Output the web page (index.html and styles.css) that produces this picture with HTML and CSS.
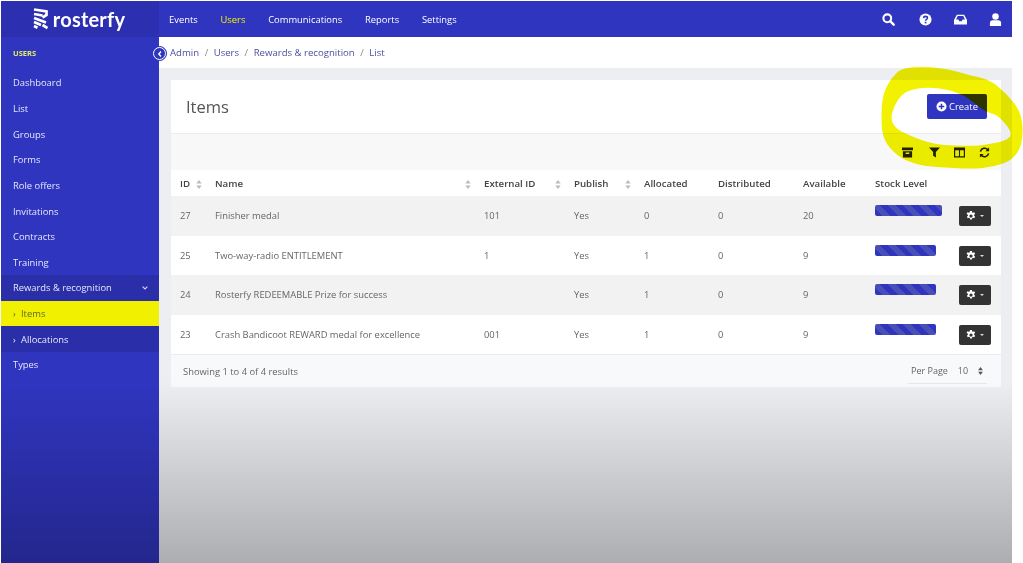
FILE: index.html
```html
<!DOCTYPE html>
<html lang="en">
<head>
<meta charset="utf-8">
<title>Items - Rosterfy</title>
<link rel="stylesheet" href="styles.css">
</head>
<body>
<svg class="defs" width="0" height="0" aria-hidden="true">
  <defs>
    <symbol id="sort" viewBox="0 0 6 10"><path d="M3 0 6 4H0ZM3 10 0 6H6Z"/></symbol>
    <symbol id="gear" viewBox="0 0 16 16"><path fill-rule="evenodd" d="M6.600 0h2.800l.4 2.200 1.300.7 2.100-.8 1.400 2.500-1.700 1.400v1.600l1.700 1.400-1.400 2.500-2.100-.8-1.300.7-.4 2.200H6.600l-.4-2.200-1.300-.7-2.100.8-1.400-2.500 1.700-1.400V6L.9 4.600l1.400-2.500 2.100.8 1.300-.7ZM8 5.400a2.600 2.600 0 1 0 0 5.200 2.600 2.600 0 0 0 0-5.200Z"/></symbol>
  </defs>
</svg>
<div class="screen">
  <header class="topbar">
    <div class="brand">
      <svg class="brand-mark" viewBox="0 0 15 22"><path fill="none" stroke="#fff" stroke-width="2.700" d="M1 1.500 13.500 3.500V7L9.500 9.500M1 6 9.500 7.500M1 10 13 14.500M1 14 8 17M1 18 4.500 19.700M9.500 17 14.500 20"/></svg>
      <span class="brand-name">rosterfy</span>
    </div>
    <nav class="topnav">
      <a>Events</a>
      <a class="active">Users</a>
      <a>Communications</a>
      <a>Reports</a>
      <a>Settings</a>
    </nav>
    <div class="top-icons">
      <svg class="first" viewBox="0 0 14 14"><circle cx="5.700" cy="5.700" r="4.200" fill="none" stroke="#fff" stroke-width="2.200"/><path d="M8.800 8.800 12.600 12.600" stroke="#fff" stroke-width="2.600" stroke-linecap="round"/></svg>
      <svg viewBox="0 0 14 14"><circle cx="7" cy="7" r="6.500" fill="#fff"/><path d="M4.900 5.500C5 3 9.100 3.100 9.100 5.400 9.100 7 7.100 6.900 7.100 8.300" fill="none" stroke="#3035c0" stroke-width="1.700"/><rect x="6.200" y="9.400" width="1.800" height="1.800" fill="#3035c0"/></svg>
      <svg viewBox="0 0 16 12"><path fill="#fff" fill-rule="evenodd" d="M3.500 0h9L16 6.500V12H0V6.500ZM4.600 1.800 2.500 6H5.500L6.500 8H9.500L10.500 6H13.500L11.400 1.800Z"/></svg>
      <svg viewBox="0 0 14 14"><circle cx="7" cy="3.700" r="3.500" fill="#fff"/><path fill="#fff" d="M1 14V10.500C1 8.500 3 7.800 4 7.800H10C11 7.800 13 8.500 13 10.500V14Z"/></svg>
    </div>
  </header>
  <div class="body-row">
    <aside class="sidebar">
      <div class="side-title">USERS</div>
      <ul class="side-menu">
        <li>Dashboard</li>
        <li>List</li>
        <li>Groups</li>
        <li>Forms</li>
        <li>Role offers</li>
        <li>Invitations</li>
        <li>Contracts</li>
        <li>Training</li>
        <li class="open">Rewards &amp; recognition<svg class="chev" viewBox="0 0 6 4"><path d="M.6.600 3 3 5.400.600" fill="none" stroke="#d8d9f5" stroke-width="1.100"/></svg></li>
        <li class="sub current"><i>›</i>Items</li>
        <li class="sub"><i>›</i>Allocations</li>
        <li>Types</li>
      </ul>
    </aside>
    <main class="main">
      <button class="collapse" aria-label="Collapse"><svg viewBox="0 0 6 8"><path d="M4 1.500 1.800 4 4 6.500" fill="none" stroke="#fff" stroke-width="1.400"/></svg></button>
      <div class="crumbs">
        <span>Admin</span><b>/</b><span>Users</span><b>/</b><span>Rewards &amp; recognition</span><b>/</b><span>List</span>
      </div>
      <div class="content">
        <section class="card">
          <div class="card-head">
            <h1>Items</h1>
            <a class="create"><svg viewBox="0 0 12 12"><circle cx="6" cy="6" r="5.500" fill="#fff"/><path d="M6 3V9M3 6H9" stroke="#3035c0" stroke-width="1.600"/></svg>Create</a>
          </div>
          <div class="toolbar">
            <svg class="first" viewBox="0 0 12 11"><path fill="#222" d="M0 0H12V3H0ZM1 4H11V11H1ZM4 5.500V7H8V5.500Z" fill-rule="evenodd"/></svg>
            <svg viewBox="0 0 12 11"><path fill="#222" d="M0 0H12L7.500 5V11L4.500 9V5Z"/></svg>
            <svg viewBox="0 0 12 11"><path fill="#222" fill-rule="evenodd" d="M0 0H12V11H0ZM1.300 3V9.700H5.400V3ZM6.600 3V9.700H10.700V3Z"/></svg>
            <svg viewBox="0 0 12 12"><path fill="none" stroke="#222" stroke-width="1.700" d="M1.500 5A4.700 4.700 0 0 1 9.800 3.200M10.500 7A4.700 4.700 0 0 1 2.200 8.800"/><path fill="#222" d="M11 .5V4.500H7ZM1 11.500V7.500H5Z"/></svg>
          </div>
          <table class="items">
            <colgroup>
              <col class="c-id"><col class="c-name"><col class="c-ext"><col class="c-pub"><col class="c-all"><col class="c-dis"><col class="c-ava"><col class="c-sto">
            </colgroup>
            <thead>
              <tr>
                <th>ID<svg class="sort"><use href="#sort"/></svg></th>
                <th>Name<svg class="sort"><use href="#sort"/></svg></th>
                <th>External ID<svg class="sort"><use href="#sort"/></svg></th>
                <th>Publish<svg class="sort"><use href="#sort"/></svg></th>
                <th>Allocated</th>
                <th>Distributed</th>
                <th>Available</th>
                <th>Stock Level</th>
              </tr>
            </thead>
            <tbody>
              <tr>
                <td>27</td><td>Finisher medal</td><td>101</td><td>Yes</td><td>0</td><td>0</td><td>20</td>
                <td><div class="stock"><span class="bar full"></span><a class="gear-btn"><svg><use href="#gear"/></svg><i></i></a></div></td>
              </tr>
              <tr>
                <td>25</td><td>Two-way-radio ENTITLEMENT</td><td>1</td><td>Yes</td><td>1</td><td>0</td><td>9</td>
                <td><div class="stock"><span class="bar"></span><a class="gear-btn"><svg><use href="#gear"/></svg><i></i></a></div></td>
              </tr>
              <tr>
                <td>24</td><td>Rosterfy REDEEMABLE Prize for success</td><td></td><td>Yes</td><td>1</td><td>0</td><td>9</td>
                <td><div class="stock"><span class="bar"></span><a class="gear-btn"><svg><use href="#gear"/></svg><i></i></a></div></td>
              </tr>
              <tr>
                <td>23</td><td>Crash Bandicoot REWARD medal for excellence</td><td>001</td><td>Yes</td><td>1</td><td>0</td><td>9</td>
                <td><div class="stock"><span class="bar"></span><a class="gear-btn"><svg><use href="#gear"/></svg><i></i></a></div></td>
              </tr>
            </tbody>
          </table>
          <div class="card-foot">
            <span>Showing 1 to 4 of 4 results</span>
            <div class="per-page"><span>Per Page</span><span>10</span><svg class="updown"><use href="#sort"/></svg></div>
          </div>
        </section>
      </div>
    </main>
  </div>
  <div class="fade"></div>
</div>
<svg class="scribble" viewBox="0 0 1023 563" aria-hidden="true">
  <path fill="#f2f200" fill-rule="evenodd" d="M897.500 72Q903 67 921.500 67Q940 67 956.500 71.500Q973 76 981.500 78Q990 80 998 86.500Q1006 93 1014 103Q1022 113 1022.500 128Q1023 143 1018 151.500Q1013 160 1003 163.500Q993 167 983 168Q973 169 954 168Q935 167 926.500 166Q918 165 908 161Q898 157 890.500 148.500Q883 140 882 128.500Q881 117 882 105Q883 93 887.500 85Q892 77 897.500 72ZM904 93.500Q910 89 922.500 88Q935 87 947.500 90Q960 93 966.500 97.500Q973 102 979.500 107Q986 112 992 113.500Q998 115 1005.500 124Q1013 133 1009.500 137Q1006 141 994.500 143Q983 145 978 145.500Q973 146 954 145.500Q935 145 921.500 140Q908 135 901.500 131.500Q895 128 892.500 122.500Q890 117 894 107.500Q898 98 904 93.500Z"/>
</svg>
</body>
</html>
```
FILE: styles.css
```css
* { box-sizing: border-box; }
html, body { margin: 0; height: 100%; overflow: hidden; }
body {
  position: relative;
  background: #fff;
  padding: 1px 0 0 1px;
  font-family: "Open Sans", "Noto Sans", sans-serif;
  font-size: 9.400px;
  color: #666;
}
.defs { position: absolute; }
.screen {
  position: relative;
  width: 1011px;
  height: 562px;
  display: flex;
  flex-direction: column;
  overflow: hidden;
}
.topbar {
  flex: 0 0 36px;
  display: flex;
  align-items: center;
  background: #3035c0;
  color: #fff;
}
.brand {
  width: 158px;
  height: 100%;
  display: flex;
  align-items: center;
  justify-content: center;
  gap: 5px;
  background: #2c30b0;
  padding-right: 2px;
}
.brand-mark { width: 15px; height: 22px; }
.brand-name {
  font-family: "Lato", sans-serif;
  font-weight: 700;
  font-size: 20px;
  letter-spacing: .2px;
  color: #fff;
}
.topnav { display: flex; gap: 22.800px; margin-left: 10px; }
.topnav a { color: #fff; }
.topnav .active { color: #f0f000; }
.top-icons {
  margin-left: auto;
  display: flex;
  align-items: center;
  gap: 22px;
  padding-right: 10px;
}
.top-icons svg { width: 13px; height: 13px; }
.top-icons .first { margin-right: 2px; }
.body-row { flex: 1; display: flex; min-height: 0; }
.sidebar {
  flex: 0 0 158px;
  background: #3035c0;
  color: #e6e7fa;
}
.side-title {
  height: 33px;
  padding: 11px 0 0 12px;
  font-size: 7.500px;
  font-weight: 700;
  color: #e4ec60;
}
.side-menu { list-style: none; margin: 0; padding: 0; }
.side-menu li {
  height: 25.650px;
  display: flex;
  align-items: center;
  padding-left: 12px;
}
.side-menu .open { background: #2a2ea8; position: relative; }
.side-menu .sub { background: #2a2ea8; padding-left: 12px; }
.side-menu .sub i { font-style: normal; font-size: 9px; width: 8px; }
.side-menu .current { background: #f0f000; color: #5c6a20; }
.chev { width: 6px; height: 4px; margin-left: auto; margin-right: 11px; }
.main {
  flex: 1;
  position: relative;
  display: flex;
  flex-direction: column;
  min-width: 0;
}
.collapse {
  position: absolute;
  left: -7px;
  top: 9px;
  width: 15px;
  height: 15px;
  padding: 0;
  border: 1.500px solid #3035c0;
  outline: 1px solid #fff;
  outline-offset: -2.500px;
  border-radius: 50%;
  background: #3035c0;
  display: flex;
  align-items: center;
  justify-content: center;
}
.collapse svg { width: 6px; height: 8px; }
.crumbs {
  flex: 0 0 31px;
  display: flex;
  align-items: center;
  gap: 5.500px;
  padding-left: 11px;
  background: #fff;
  color: #4b4f9e;
  font-size: 9.600px;
}
.crumbs b { font-weight: 400; color: #888; }
.content { flex: 1; background: #eceef2; padding: 12px 11px 0 12px; }
.card { background: #fff; }
.card-head {
  height: 54px;
  display: flex;
  align-items: center;
  justify-content: space-between;
  padding: 0 14px 0 15px;
  border-bottom: 1px solid #ececee;
}
.card-head h1 { margin: 0; font-size: 16.500px; font-weight: 400; color: #555; }
.create {
  width: 60px;
  height: 25px;
  display: flex;
  align-items: center;
  justify-content: center;
  gap: 2px;
  border-radius: 2px;
  background: #3035c0;
  color: #fff;
}
.create svg { width: 11px; height: 11px; }
.toolbar {
  height: 36px;
  display: flex;
  align-items: center;
  justify-content: flex-end;
  gap: 14px;
  padding-right: 11px;
  background: #f8f8f9;
}
.toolbar svg { width: 11px; height: 11px; }
.toolbar .first { margin-right: 2px; }
.items {
  width: 100%;
  border-collapse: collapse;
  table-layout: fixed;
}
.c-id { width: 35px; }
.c-name { width: 269px; }
.c-ext { width: 90px; }
.c-pub { width: 70px; }
.c-all { width: 74px; }
.c-dis { width: 85px; }
.c-ava { width: 72px; }
.items th {
  height: 26px;
  padding: 0 4px 0 9px;
  text-align: left;
  font-weight: 600;
  color: #444;
  font-size: 9.700px;
}
.sort { float: right; width: 6px; height: 9px; margin-top: 3px; fill: #bbb; }
.items td { height: 39.500px; padding: 0 0 0 9px; }
.items tbody tr:nth-child(odd) { background: #f2f2f2; }
.stock {
  display: flex;
  justify-content: space-between;
  align-items: flex-start;
  padding: 0 10px 0 0;
}
.bar {
  width: 61px;
  height: 11px;
  border-radius: 2px;
  background: repeating-linear-gradient(45deg, #3035c0 0 5.500px, #4a4fb8 5.500px 11px);
}
.bar.full { width: 67px; }
.gear-btn {
  margin-top: 1px;
  width: 32px;
  height: 20px;
  display: flex;
  align-items: center;
  justify-content: center;
  gap: 4px;
  border-radius: 2px;
  background: #333;
}
.gear-btn svg { width: 10px; height: 10px; fill: #fff; }
.gear-btn i { border: 2.500px solid transparent; border-top-color: #ddd; border-bottom: 0; }
.card-foot {
  height: 33px;
  display: flex;
  align-items: center;
  justify-content: space-between;
  padding: 0 14px 0 12px;
  background: #f8f9fa;
  border-top: 1px solid #ececee;
}
.per-page {
  width: 79px;
  height: 26px;
  display: flex;
  align-items: center;
  gap: 10px;
  padding-left: 3px;
  border-bottom: 1px solid #e8e8ea;
  white-space: nowrap;
  font-size: 9px;
}
.updown { width: 5px; height: 8px; fill: #555; }
.fade {
  position: absolute;
  inset: 380px 0 0 0;
  background: linear-gradient(rgba(0,0,0,0), rgba(0,0,0,.27));
  pointer-events: none;
}
.scribble {
  position: absolute;
  left: 0;
  top: 0;
  width: 1023px;
  height: 563px;
  mix-blend-mode: multiply;
  pointer-events: none;
}
```
